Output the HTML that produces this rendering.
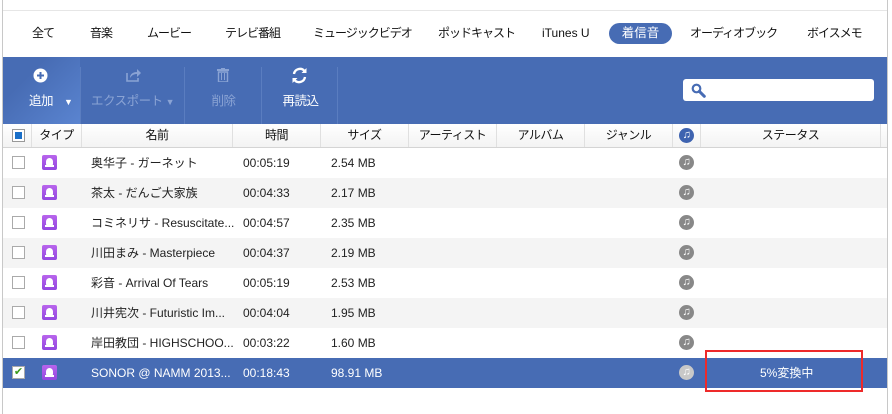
<!DOCTYPE html>
<html><head><meta charset="utf-8"><style>
*{margin:0;padding:0;box-sizing:border-box}
body{width:892px;height:414px;background:#fff;position:relative;overflow:hidden;font-family:"Liberation Sans","Noto Sans CJK JP",sans-serif;font-size:12px;color:#222}
.abs{position:absolute}
.tab{position:absolute;top:25px;font-size:12px;line-height:16px;color:#111;white-space:nowrap;letter-spacing:-1px}
.tb{position:absolute;top:57px;left:3px;width:884px;height:67px;background:#476cb4}
.btn{position:absolute;top:0;height:67px;text-align:center;color:#fff;font-size:12.5px;letter-spacing:-0.5px}
.btn .lbl{position:absolute;top:33px;left:0;right:0}
.sep{position:absolute;top:10px;width:1px;height:57px;background:#5a7dc0}
.hdr{position:absolute;top:124px;left:3px;width:884px;height:24px;background:linear-gradient(#fff,#f3f3f3);border-bottom:1px solid #d4d4d4}
.hc{position:absolute;top:0;height:23px;line-height:23px;text-align:center;border-right:1px solid #e0e0e0;font-size:12px;color:#111;letter-spacing:-0.5px}
.row{position:absolute;left:3px;width:884px;height:30px;line-height:30px;font-size:12px;color:#222}
.row.g{background:#f4f4f4}
.row.sel{background:#476cb4;color:#fff}
.cb{position:absolute;left:9px;top:8px;width:13px;height:13px;border:1px solid #aaa;background:#fff}
.bell{position:absolute;left:39px;top:7px;width:15px;height:15px;border-radius:2px;background:linear-gradient(#b865ec,#9347e0)}
.bell:after{content:"";position:absolute;left:4px;top:3px;width:7px;height:7px;background:#fff;border-radius:4px 4px 1px 1px}
.bell:before{content:"";position:absolute;left:3px;top:10px;width:9px;height:1.5px;background:#fff}
.nm{position:absolute;left:88px}
.tm{position:absolute;left:240px}
.sz{position:absolute;left:328px}
.note{position:absolute;left:676px;top:7px;width:15px;height:15px;border-radius:8px;background:#888;color:#fff;font-size:11px;line-height:15px;text-align:center;font-weight:bold}
</style></head><body>
<div class="abs" style="left:2px;top:0;width:1px;height:414px;background:#c8c8c8"></div>
<div class="abs" style="left:3px;top:10px;width:884px;height:1px;background:#e6e6e6"></div>
<div class="abs" style="left:887px;top:0;width:1px;height:414px;background:#c8c8c8"></div>

<div class="tab" style="left:32px">全て</div>
<div class="tab" style="left:90px">音楽</div>
<div class="tab" style="left:147px">ムービー</div>
<div class="tab" style="left:225px">テレビ番組</div>
<div class="tab" style="left:313px">ミュージックビデオ</div>
<div class="tab" style="left:438px">ポッドキャスト</div>
<div class="tab" style="left:542px;letter-spacing:0">iTunes U</div>
<div class="abs" style="left:609px;top:23px;width:63px;height:21px;border-radius:11px;background:#476cb4;color:#fff;font-size:12.5px;line-height:21px;text-align:center">着信音</div>
<div class="tab" style="left:690px">オーディオブック</div>
<div class="tab" style="left:807px">ボイスメモ</div>

<div class="tb">
 <div class="btn" style="left:0;width:77px;background:linear-gradient(135deg,#476cb4 30%,#5a84d0)">
  <svg class="abs" style="left:30px;top:11px" width="15" height="15" viewBox="0 0 15 15"><circle cx="7.5" cy="7.5" r="7" fill="#fff"/><path d="M7.5 4v7M4 7.5h7" stroke="#476cb4" stroke-width="2"/></svg>
  <div class="lbl" style="text-align:left;padding-left:26px">追加 <span style="font-size:9px;margin-left:8px">▼</span></div>
 </div>
 <div class="sep" style="left:77px"></div>
 <div class="btn" style="left:78px;width:103px;color:#8aa3d4">
  <svg class="abs" style="left:44px;top:11px" width="17" height="15" viewBox="0 0 17 15"><path d="M2 5v8h11v-3" stroke="#8aa3d4" stroke-width="1.6" fill="none"/><path d="M5 10c0-4 3-6 7-6V1l4 4-4 4V6c-3 0-5 1-7 4z" fill="#8aa3d4"/></svg>
  <div class="lbl">エクスポート <span style="font-size:9px">▼</span></div>
 </div>
 <div class="sep" style="left:181px"></div>
 <div class="btn" style="left:182px;width:77px;color:#8aa3d4">
  <svg class="abs" style="left:32px;top:11px" width="12" height="14" viewBox="0 0 12 14"><rect x="0" y="1" width="12" height="2" fill="#8aa3d4"/><rect x="4" y="0" width="4" height="2" fill="#8aa3d4"/><path d="M1.5 4h9v10h-9z" fill="none" stroke="#8aa3d4" stroke-width="1.4"/><path d="M4.5 5v7M7.5 5v7" stroke="#8aa3d4"/></svg>
  <div class="lbl">削除</div>
 </div>
 <div class="sep" style="left:258px"></div>
 <div class="btn" style="left:259px;width:77px">
  <svg class="abs" style="left:29px;top:10px" width="17" height="17" viewBox="0 0 17 17"><path d="M3 7a6 6 0 0 1 10.5-3" stroke="#fff" stroke-width="2.4" fill="none"/><path d="M15.5 1v5h-5z" fill="#fff"/><path d="M14 10a6 6 0 0 1-10.5 3" stroke="#fff" stroke-width="2.4" fill="none"/><path d="M1.5 16v-5h5z" fill="#fff"/></svg>
  <div class="lbl">再読込</div>
 </div>
 <div class="sep" style="left:334px"></div>
 <div class="abs" style="left:680px;top:22px;width:191px;height:22px;background:#fff;border-radius:3px">
  <svg class="abs" style="left:8px;top:4px" width="15" height="15" viewBox="0 0 15 15"><circle cx="5.5" cy="5.5" r="3.8" stroke="#476cb4" stroke-width="2.2" fill="none"/><path d="M8.3 8.3l5 5" stroke="#476cb4" stroke-width="3" stroke-linecap="round"/></svg>
 </div>
</div>

<div class="hdr">
 <div class="hc" style="left:0;width:29px"><div style="position:absolute;left:9px;top:5px;width:13px;height:13px;border:1px solid #999;background:#fff"><div style="margin:2px;width:7px;height:7px;background:#1a6fc8"></div></div></div>
 <div class="hc" style="left:29px;width:50px">タイプ</div>
 <div class="hc" style="left:79px;width:151px">名前</div>
 <div class="hc" style="left:230px;width:88px">時間</div>
 <div class="hc" style="left:318px;width:88px">サイズ</div>
 <div class="hc" style="left:406px;width:88px">アーティスト</div>
 <div class="hc" style="left:494px;width:88px">アルバム</div>
 <div class="hc" style="left:582px;width:88px">ジャンル</div>
 <div class="hc" style="left:670px;width:28px"><div style="position:absolute;left:6px;top:4px;width:15px;height:15px;border-radius:8px;background:#3e63b0;color:#fff;font-size:11px;line-height:15px;font-weight:bold">♫</div></div>
 <div class="hc" style="left:698px;width:180px">ステータス</div>
</div>

<div class="row" style="top:148px"><div class="cb"></div><div class="bell"></div><span class="nm">奥华子 - ガーネット</span><span class="tm">00:05:19</span><span class="sz">2.54 MB</span><div class="note">♫</div></div>
<div class="row g" style="top:178px"><div class="cb"></div><div class="bell"></div><span class="nm">茶太 - だんご大家族</span><span class="tm">00:04:33</span><span class="sz">2.17 MB</span><div class="note">♫</div></div>
<div class="row" style="top:208px"><div class="cb"></div><div class="bell"></div><span class="nm">コミネリサ - Resuscitate...</span><span class="tm">00:04:57</span><span class="sz">2.35 MB</span><div class="note">♫</div></div>
<div class="row g" style="top:238px"><div class="cb"></div><div class="bell"></div><span class="nm">川田まみ - Masterpiece</span><span class="tm">00:04:37</span><span class="sz">2.19 MB</span><div class="note">♫</div></div>
<div class="row" style="top:268px"><div class="cb"></div><div class="bell"></div><span class="nm">彩音 - Arrival Of Tears</span><span class="tm">00:05:19</span><span class="sz">2.53 MB</span><div class="note">♫</div></div>
<div class="row g" style="top:298px"><div class="cb"></div><div class="bell"></div><span class="nm">川井宪次 - Futuristic Im...</span><span class="tm">00:04:04</span><span class="sz">1.95 MB</span><div class="note">♫</div></div>
<div class="row" style="top:328px"><div class="cb"></div><div class="bell"></div><span class="nm">岸田教団 - HIGHSCHOO...</span><span class="tm">00:03:22</span><span class="sz">1.60 MB</span><div class="note">♫</div></div>
<div class="row sel" style="top:358px"><div class="cb" style="color:#3a9a1a;font-size:11px;line-height:11px;text-align:center">✔</div><div class="bell"></div><span class="nm">SONOR @ NAMM 2013...</span><span class="tm">00:18:43</span><span class="sz">98.91 MB</span><div class="note" style="background:#c8c8c8">♫</div><span style="position:absolute;left:757px">5%変換中</span></div>

<div class="abs" style="left:705px;top:350px;width:158px;height:42px;border:2.5px solid #ee2a2a"></div>
</body></html>
